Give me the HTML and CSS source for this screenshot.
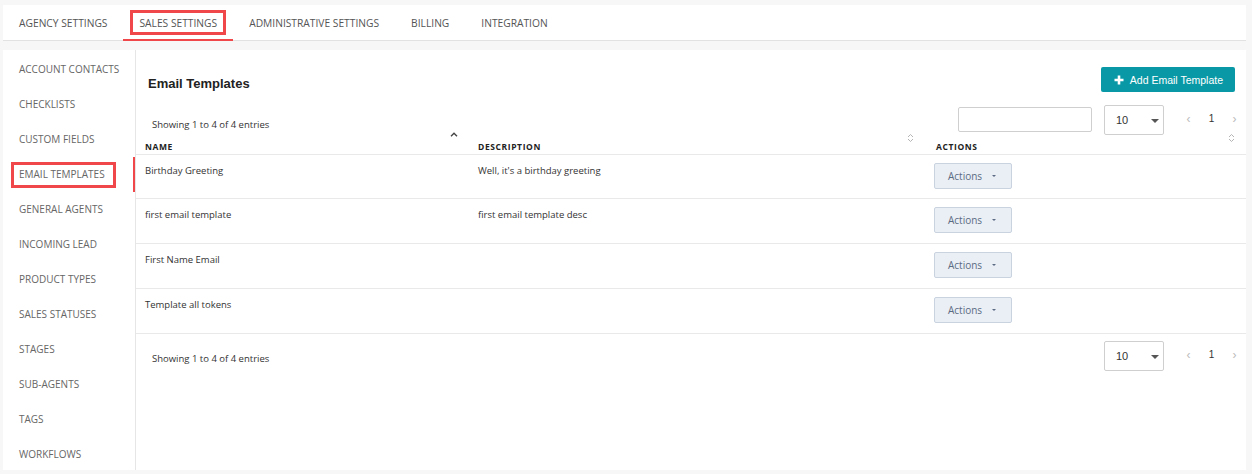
FILE: index.html
```html
<!DOCTYPE html>
<html lang="en">
<head>
  <meta charset="UTF-8" />
  <title>Sales Settings - Email Templates</title>
  <link rel="stylesheet" href="styles.css">
</head>
<body>
  <div class="page">
    <nav class="tabs">
      <a class="tab">AGENCY SETTINGS</a>
      <a class="tab active"><span class="mark mark-tab">SALES SETTINGS</span></a>
      <a class="tab">ADMINISTRATIVE SETTINGS</a>
      <a class="tab">BILLING</a>
      <a class="tab">INTEGRATION</a>
    </nav>

    <div class="panel">
      <aside class="side">
        <a class="side-item">ACCOUNT CONTACTS</a>
        <a class="side-item">CHECKLISTS</a>
        <a class="side-item">CUSTOM FIELDS</a>
        <a class="side-item"><span class="mark mark-side">EMAIL TEMPLATES</span></a>
        <a class="side-item">GENERAL AGENTS</a>
        <a class="side-item">INCOMING LEAD</a>
        <a class="side-item">PRODUCT TYPES</a>
        <a class="side-item">SALES STATUSES</a>
        <a class="side-item">STAGES</a>
        <a class="side-item">SUB-AGENTS</a>
        <a class="side-item">TAGS</a>
        <a class="side-item">WORKFLOWS</a>
      </aside>

      <main class="content">
        <div class="head">
          <h2>Email Templates</h2>
          <button class="btn-add">
            <svg width="10" height="10" viewBox="0 0 10 10"><path d="M5 0.5v9M0.5 5h9" stroke="#fff" stroke-width="2.6"/></svg>
            Add Email Template
          </button>
        </div>

        <div class="toolbar">
          <div class="info">Showing 1 to 4 of 4 entries</div>
          <input class="search" type="text">
          <div class="select">10<span class="caret"></span></div>
          <div class="pager"><span class="arrow">&#8249;</span><span>1</span><span class="arrow">&#8250;</span></div>
        </div>

        <table class="grid">
          <colgroup>
            <col style="width:333px">
            <col style="width:458px">
            <col>
          </colgroup>
          <thead>
            <tr>
              <th>NAME
                <svg class="sort sort-up" width="8" height="5" viewBox="0 0 8 5"><path d="M1 4.2L4 1.2L7 4.2" fill="none" stroke="#444" stroke-width="1.4"/></svg>
              </th>
              <th>DESCRIPTION
                <svg class="sort" width="7" height="10" viewBox="0 0 7 10"><path d="M1 4L3.5 1.5L6 4M1 6L3.5 8.5L6 6" fill="none" stroke="#b5b5b5" stroke-width="1"/></svg>
              </th>
              <th>ACTIONS
                <svg class="sort sort-last" width="7" height="10" viewBox="0 0 7 10"><path d="M1 4L3.5 1.5L6 4M1 6L3.5 8.5L6 6" fill="none" stroke="#b5b5b5" stroke-width="1"/></svg>
              </th>
            </tr>
          </thead>
          <tbody>
            <tr class="current">
              <td>Birthday Greeting</td>
              <td>Well, it's a birthday greeting</td>
              <td class="act"><button class="btn-act">Actions<span class="caret-sm"></span></button></td>
            </tr>
            <tr>
              <td>first email template</td>
              <td>first email template desc</td>
              <td class="act"><button class="btn-act">Actions<span class="caret-sm"></span></button></td>
            </tr>
            <tr>
              <td>First Name Email</td>
              <td></td>
              <td class="act"><button class="btn-act">Actions<span class="caret-sm"></span></button></td>
            </tr>
            <tr>
              <td>Template all tokens</td>
              <td></td>
              <td class="act"><button class="btn-act">Actions<span class="caret-sm"></span></button></td>
            </tr>
          </tbody>
        </table>

        <div class="toolbar foot">
          <div class="info">Showing 1 to 4 of 4 entries</div>
          <div class="select">10<span class="caret"></span></div>
          <div class="pager"><span class="arrow">&#8249;</span><span>1</span><span class="arrow">&#8250;</span></div>
        </div>
      </main>
    </div>
  </div>
</body>
</html>
```

FILE: styles.css
```css
* {
  box-sizing: border-box;
}

body {
  margin: 0;
  background: #f7f7f7;
  font-family: "Open Sans", sans-serif;
  color: #333;
}

.page {
  padding: 5px 6px 4px 3px;
}

/* top tabs */
.tabs {
  display: flex;
  height: 36px;
  background: #fff;
  border-bottom: 1px solid #e2e2e2;
}

.tab {
  display: flex;
  align-items: center;
  height: 36px;
  padding: 1px 16px 0;
  font-size: 10.25px;
  color: #555;
  border-bottom: 2px solid transparent;
  margin-bottom: -1px;
}

.tab.active {
  border-bottom-color: #f0474a;
}

.mark {
  position: relative;
  display: inline-block;
  line-height: 12px;
}

.mark::after {
  content: "";
  position: absolute;
  border: 3px solid #f0474a;
}

.mark-tab::after {
  top: -7px;
  bottom: -6px;
  left: -9px;
  right: -9px;
}

.mark-side::after {
  top: -6px;
  bottom: -8px;
  left: -8px;
  right: -11px;
}

/* panel */
.panel {
  display: flex;
  height: 420px;
  margin-top: 9px;
  background: #fff;
}

.side {
  width: 133px;
  padding-top: 2px;
  border-right: 1px solid #e6e6e6;
}

.side-item {
  display: block;
  height: 35px;
  line-height: 35px;
  padding-left: 16px;
  font-size: 10px;
  color: #666;
}

.content {
  flex: 1;
}

.head {
  display: flex;
  justify-content: space-between;
  align-items: flex-start;
  padding: 17px 11px 0 12px;
}

.head h2 {
  margin: 8px 0 0;
  font-family: "Liberation Sans", sans-serif;
  font-size: 13px;
  line-height: 18px;
  color: #222;
}

.btn-add {
  display: flex;
  align-items: center;
  gap: 6px;
  height: 25px;
  padding: 0 12px 0 13px;
  border: none;
  border-radius: 2px;
  background: #0999a6;
  color: #fff;
  font-family: "Liberation Sans", sans-serif;
  font-size: 10.5px;
}

/* toolbar */
.toolbar {
  display: flex;
  align-items: flex-start;
  height: 30px;
  margin-top: 12px;
  padding-left: 16px;
}

.info {
  flex: 1;
  margin-top: 13px;
  line-height: 14px;
  font-size: 9.5px;
  color: #333;
}

.search {
  width: 134px;
  height: 25px;
  margin-top: 2px;
  border: 1px solid #cfcfcf;
  border-radius: 2px;
}

.select {
  position: relative;
  width: 60px;
  height: 30px;
  margin-left: 12px;
  padding-left: 11px;
  border: 1px solid #cfcfcf;
  border-radius: 2px;
  line-height: 28px;
  font-family: "Liberation Sans", sans-serif;
  font-size: 11px;
  color: #333;
}

.caret {
  position: absolute;
  right: 4px;
  top: 13px;
  border-left: 4px solid transparent;
  border-right: 4px solid transparent;
  border-top: 4px solid #555;
}

.pager {
  display: flex;
  margin-left: 13px;
  margin-top: 7px;
  line-height: 14px;
  font-family: "Liberation Sans", sans-serif;
  font-size: 10px;
  color: #333;
}

.pager span {
  width: 23px;
  text-align: center;
}

.pager .arrow {
  color: #bbb;
  font-size: 12px;
}

/* table */
.grid {
  width: 100%;
  margin-top: -8px;
  border-collapse: collapse;
  table-layout: fixed;
}

.grid th {
  position: relative;
  height: 27px;
  padding: 0 9px 1px;
  vertical-align: bottom;
  text-align: left;
  line-height: 12px;
  font-size: 8.5px;
  font-weight: 700;
  letter-spacing: 0.6px;
  color: #222;
  border-bottom: 1px solid #e9e9e9;
}

.sort {
  position: absolute;
  right: 13px;
  top: 6px;
}

.sort-up {
  right: 11px;
  top: 5px;
}

.sort-last {
  right: 11px;
}

.grid td {
  position: relative;
  height: 44.8px;
  padding: 10px 9px 0;
  vertical-align: top;
  line-height: 12px;
  font-size: 9.5px;
  color: #333;
  border-bottom: 1px solid #e9e9e9;
}

.grid td.act {
  padding: 8px 7px 0;
}

.current td:first-child::before {
  content: "";
  position: absolute;
  left: -3px;
  top: 2px;
  width: 2px;
  height: 35px;
  background: #f0474a;
}

.btn-act {
  display: flex;
  align-items: center;
  width: 78px;
  height: 26px;
  padding: 0 0 0 13px;
  border: 1px solid #c9d3df;
  border-radius: 2px;
  background: #eaeff6;
  font-family: "Open Sans", sans-serif;
  font-size: 10px;
  color: #5b6b82;
}

.caret-sm {
  margin-left: 10px;
  border-left: 2.5px solid transparent;
  border-right: 2.5px solid transparent;
  border-top: 2.5px solid #5b6b82;
}

.foot {
  margin-top: 7px;
}

.foot .info {
  margin-top: 11px;
}
```
